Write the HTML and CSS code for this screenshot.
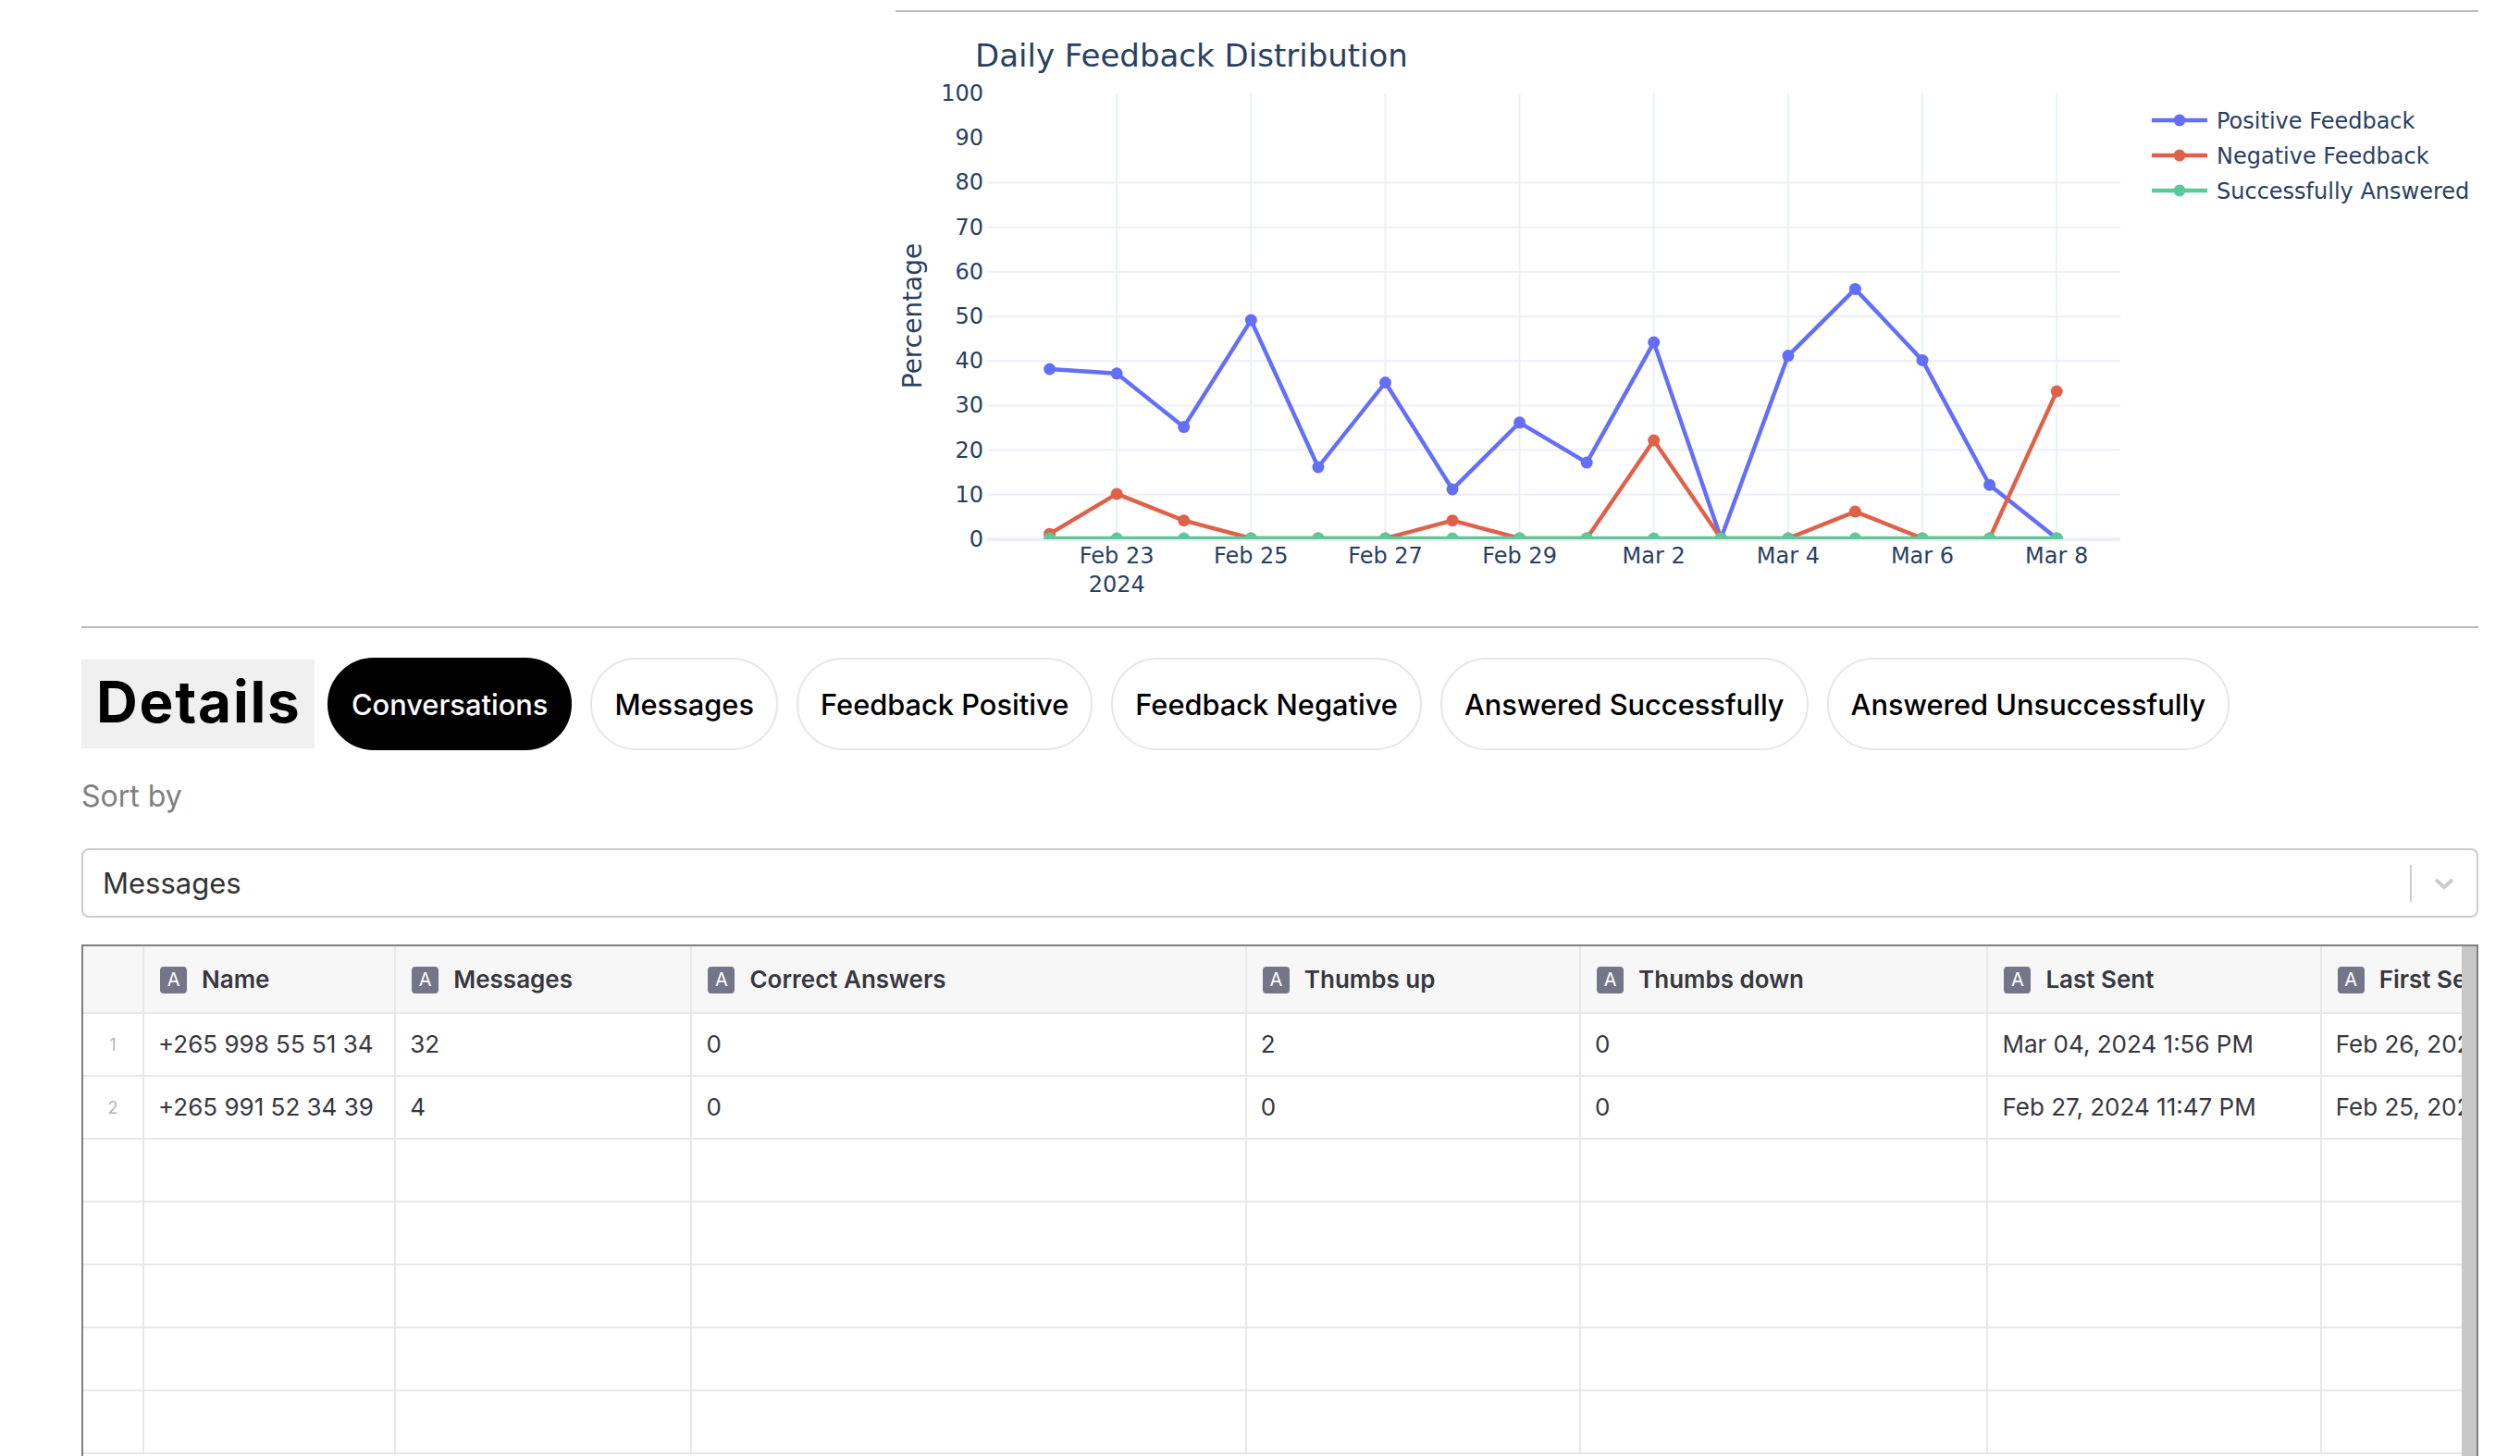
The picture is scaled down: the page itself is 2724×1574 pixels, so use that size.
FILE: index.html
```html
<!DOCTYPE html>
<html lang="en">
<head>
  <meta charset="UTF-8">
  <meta name="viewport" content="width=device-width, initial-scale=1.0">
  <title>Details</title>
  <link rel="stylesheet" href="styles.css">
</head>
<body>
  <div class="page">
    <section class="chart-panel">
      <!-- viewBox is in page pixels so the plot numbers read like the screenshot -->
      <svg class="chart" viewBox="968 13 1711 664" width="1711" height="664">
        <defs>
          <clipPath id="plot-clip"><rect x="1067" y="90" width="1225" height="493"></rect></clipPath>
          <marker id="dot-blue" markerUnits="userSpaceOnUse" markerWidth="14" markerHeight="14" refX="7" refY="7"><circle cx="7" cy="7" r="6.5" fill="#636efa"></circle></marker>
          <marker id="dot-red" markerUnits="userSpaceOnUse" markerWidth="14" markerHeight="14" refX="7" refY="7"><circle cx="7" cy="7" r="6.5" fill="#e0614a"></circle></marker>
          <marker id="dot-green" markerUnits="userSpaceOnUse" markerWidth="14" markerHeight="14" refX="7" refY="7"><circle cx="7" cy="7" r="6.5" fill="#5cc99b"></circle></marker>
        </defs>

        <text class="chart-title" x="1054" y="72">Daily Feedback Distribution</text>

        <g class="grid">
          <path d="M1067 197.5H2292M1067 245.7H2292M1067 293.9H2292M1067 342H2292M1067 390.2H2292M1067 438.4H2292M1067 486.6H2292M1067 534.7H2292"></path>
          <path d="M1207.2 101V582M1352.3 101V582M1497.5 101V582M1642.6 101V582M1787.7 101V582M1932.9 101V582M2078 101V582M2223.2 101V582"></path>
        </g>
        <path class="zero-line" d="M1067 583H2292"></path>

        <g class="ticks ticks-y">
          <text x="1063" y="109">100</text>
          <text x="1063" y="157">90</text>
          <text x="1063" y="205">80</text>
          <text x="1063" y="254">70</text>
          <text x="1063" y="302">60</text>
          <text x="1063" y="350">50</text>
          <text x="1063" y="398">40</text>
          <text x="1063" y="446">30</text>
          <text x="1063" y="495">20</text>
          <text x="1063" y="543">10</text>
          <text x="1063" y="591">0</text>
        </g>
        <g class="ticks ticks-x">
          <text x="1207.2" y="609">Feb 23</text>
          <text x="1207.2" y="640">2024</text>
          <text x="1352.3" y="609">Feb 25</text>
          <text x="1497.5" y="609">Feb 27</text>
          <text x="1642.6" y="609">Feb 29</text>
          <text x="1787.7" y="609">Mar 2</text>
          <text x="1932.9" y="609">Mar 4</text>
          <text x="2078" y="609">Mar 6</text>
          <text x="2223.2" y="609">Mar 8</text>
        </g>
        <text class="axis-title" transform="translate(996 341.5) rotate(-90)">Percentage</text>

        <g clip-path="url(#plot-clip)">
          <polyline class="series series-blue" points="1134.6,399 1207.2,403.8 1279.7,461.6 1352.3,346.1 1424.9,505 1497.5,413.5 1570,529 1642.6,456.8 1715.2,500.1 1787.7,370.1 1860.3,582 1932.9,384.6 2005.4,312.4 2078,389.4 2150.6,524.2 2223.2,582"></polyline>
          <polyline class="series series-red" points="1134.6,577.2 1207.2,533.9 1279.7,562.7 1352.3,582 1424.9,582 1497.5,582 1570,562.7 1642.6,582 1715.2,582 1787.7,476.1 1860.3,582 1932.9,582 2005.4,553.1 2078,582 2150.6,582 2223.2,423.1"></polyline>
          <polyline class="series series-green" points="1134.6,582 1207.2,582 1279.7,582 1352.3,582 1424.9,582 1497.5,582 1570,582 1642.6,582 1715.2,582 1787.7,582 1860.3,582 1932.9,582 2005.4,582 2078,582 2150.6,582 2223.2,582"></polyline>
        </g>

        <g class="legend">
          <path class="series series-blue" d="M2326 130H2356H2386"></path>
          <text x="2396" y="138.5">Positive Feedback</text>
          <path class="series series-red" d="M2326 168H2356H2386"></path>
          <text x="2396" y="176.5">Negative Feedback</text>
          <path class="series series-green" d="M2326 206H2356H2386"></path>
          <text x="2396" y="214.5">Successfully Answered</text>
        </g>
      </svg>
    </section>

    <section class="details">
      <div class="tabs">
        <h2 class="details-title">Details</h2>
        <button class="tab tab-active">Conversations</button>
        <button class="tab">Messages</button>
        <button class="tab">Feedback Positive</button>
        <button class="tab">Feedback Negative</button>
        <button class="tab">Answered Successfully</button>
        <button class="tab">Answered Unsuccessfully</button>
      </div>

      <label class="sort-label">Sort by</label>
      <div class="select">
        <span class="select-value">Messages</span>
        <span class="select-sep"></span>
        <svg class="select-arrow" viewBox="0 0 24 14" width="24" height="14"><path d="M3 3l9 8 9-8"></path></svg>
      </div>

      <div class="table-wrap">
        <div class="table-scroll">
          <table class="grid-table">
            <thead>
              <tr>
                <th class="col-index"></th>
                <th class="col-name"><span class="badge">A</span>Name</th>
                <th class="col-messages"><span class="badge">A</span>Messages</th>
                <th class="col-correct"><span class="badge">A</span>Correct Answers</th>
                <th class="col-up"><span class="badge">A</span>Thumbs up</th>
                <th class="col-down"><span class="badge">A</span>Thumbs down</th>
                <th class="col-last"><span class="badge">A</span>Last Sent</th>
                <th class="col-first"><span class="badge">A</span>First Sent</th>
              </tr>
            </thead>
            <tbody>
              <tr>
                <td class="row-num">1</td>
                <td>+265 998 55 51 34</td>
                <td>32</td>
                <td>0</td>
                <td>2</td>
                <td>0</td>
                <td>Mar 04, 2024 1:56 PM</td>
                <td>Feb 26, 2024</td>
              </tr>
              <tr>
                <td class="row-num">2</td>
                <td>+265 991 52 34 39</td>
                <td>4</td>
                <td>0</td>
                <td>0</td>
                <td>0</td>
                <td>Feb 27, 2024 11:47 PM</td>
                <td>Feb 25, 2024</td>
              </tr>
              <tr><td></td><td></td><td></td><td></td><td></td><td></td><td></td><td></td></tr>
              <tr><td></td><td></td><td></td><td></td><td></td><td></td><td></td><td></td></tr>
              <tr><td></td><td></td><td></td><td></td><td></td><td></td><td></td><td></td></tr>
              <tr><td></td><td></td><td></td><td></td><td></td><td></td><td></td><td></td></tr>
              <tr><td></td><td></td><td></td><td></td><td></td><td></td><td></td><td></td></tr>
            </tbody>
          </table>
        </div>
        <div class="scrollbar"></div>
      </div>
    </section>
  </div>
</body>
</html>
```

FILE: styles.css
```css
html, body {
  margin: 0;
  padding: 0;
  height: 100%;
  overflow: hidden;
  background-color: #fff;
}

.page {
  padding: 11px 45px 0 88px;
  font-family: Inter, "Liberation Sans", sans-serif;
}

/* chart */
.chart-panel {
  margin-left: 880px;
  border-top: 2px solid #bdbdbd;
}

.chart {
  display: block;
}

.chart text {
  font-family: "DejaVu Sans", Verdana, sans-serif;
  fill: #2a3f5f;
}

.chart .chart-title {
  font-size: 34px;
}

.chart .ticks {
  font-size: 24px;
}

.ticks-y {
  text-anchor: end;
}

.ticks-x {
  text-anchor: middle;
}

.chart .axis-title {
  font-size: 28px;
  text-anchor: middle;
}

.chart .legend {
  font-size: 24px;
}

.grid path {
  fill: none;
  stroke: #ebf0f8;
  stroke-width: 2;
}

.zero-line {
  fill: none;
  stroke: #ebf0f8;
  stroke-width: 4;
}

.series {
  fill: none;
  stroke-width: 4.4;
  stroke-linejoin: round;
}

.series-blue {
  stroke: #636efa;
  marker: url(#dot-blue);
}

.series-red {
  stroke: #e0614a;
  marker: url(#dot-red);
}

.series-green {
  stroke: #5cc99b;
  marker: url(#dot-green);
}

.legend .series {
  marker: none;
  marker-mid: url(#dot-blue);
}

.legend .series-red {
  marker-mid: url(#dot-red);
}

.legend .series-green {
  marker-mid: url(#dot-green);
}

/* details */
.details {
  border-top: 2px solid #bdbdbd;
}

.tabs {
  display: flex;
  align-items: center;
  margin-top: 32px;
}

.details-title {
  margin: 0 14px 0 0;
  padding: 0 16px;
  height: 96px;
  width: 252px;
  box-sizing: border-box;
  line-height: 92px;
  background-color: #f0f0f0;
  color: #000;
  font-size: 62px;
  font-weight: 700;
  letter-spacing: 1.8px;
  white-space: nowrap;
}

.tab {
  height: 100px;
  margin-right: 20px;
  padding: 0 24px;
  border: 2px solid #e6e6e6;
  border-radius: 50px;
  background-color: #fff;
  color: #000;
  font-family: Inter, "Liberation Sans", sans-serif;
  font-size: 30.8px;
  font-weight: 500;
  white-space: nowrap;
}

.tab-active {
  background-color: #000;
  border-color: #000;
  color: #fff;
}

.sort-label {
  display: block;
  margin-top: 32px;
  height: 74px;
  color: #808080;
  font-size: 32px;
  line-height: 36px;
}

.select {
  display: flex;
  align-items: center;
  height: 75px;
  box-sizing: border-box;
  border: 2px solid #cccccc;
  border-radius: 8px;
  padding-left: 21px;
  color: #333;
  font-size: 31px;
}

.select-value {
  flex: 1;
}

.select-sep {
  width: 2px;
  height: 40px;
  background-color: #cccccc;
}

.select-arrow {
  margin: 0 23px;
}

.select-arrow path {
  fill: none;
  stroke: #cccccc;
  stroke-width: 4;
}

.table-wrap {
  display: flex;
  margin-top: 29px;
  border: 2px solid #808080;
  height: 620px;
  overflow: hidden;
}

.table-scroll {
  flex: 1;
  min-width: 0;
  overflow: hidden;
}

.scrollbar {
  width: 16px;
  background-color: #c8c8c8;
}

.grid-table {
  border-collapse: collapse;
  table-layout: fixed;
  width: 2780px;
  color: #37373f;
  font-size: 26px;
}

.grid-table th,
.grid-table td {
  box-sizing: border-box;
  border-right: 2px solid #e8e8e8;
  border-bottom: 2px solid #e8e8e8;
  padding: 0 15px 1px;
  text-align: left;
  white-space: nowrap;
  overflow: hidden;
}

.grid-table th {
  height: 72px;
  padding: 0 17px 0;
  background-color: #f7f7f7;
  font-weight: 600;
}

.grid-table td {
  height: 68px;
}

.grid-table .row-num {
  padding: 0;
  text-align: center;
  color: #b4b4c0;
  font-size: 18px;
}

.col-index { width: 65px; }
.col-name { width: 272px; }
.col-messages { width: 320px; }
.col-correct { width: 599px; }
.col-up { width: 361px; }
.col-down { width: 440px; }
.col-last { width: 360px; }
.col-first { width: 360px; }

.badge {
  display: inline-block;
  width: 29px;
  height: 29px;
  margin-right: 16px;
  border-radius: 4px;
  background-color: #75758a;
  color: #fff;
  font-size: 20px;
  font-weight: 400;
  line-height: 29px;
  text-align: center;
  vertical-align: 2px;
}
```
